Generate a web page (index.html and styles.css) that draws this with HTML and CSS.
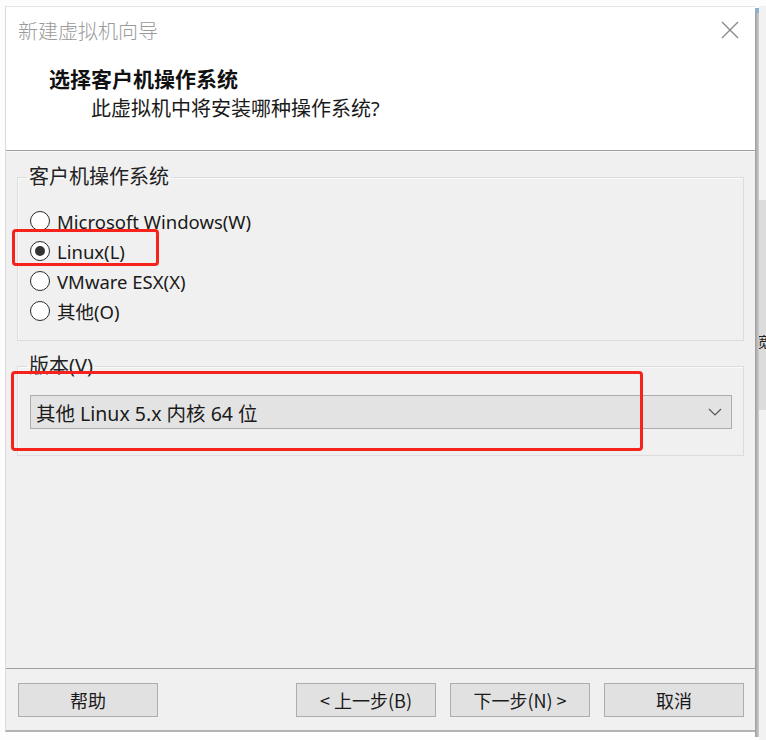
FILE: index.html
```html
<!DOCTYPE html>
<html lang="zh-CN">
<head>
  <meta charset="UTF-8">
  <title>新建虚拟机向导</title>
  <link rel="stylesheet" href="styles.css">
</head>
<body>
  <div class="screen">
    <!-- 向导窗口 -->
    <div class="window">
      <div class="header">
        <div class="titlebar">
          <span class="title">新建虚拟机向导</span>
          <svg class="close" width="18" height="18" viewBox="0 0 18 18">
            <line x1="1" y1="1" x2="17" y2="17" />
            <line x1="17" y1="1" x2="1" y2="17" />
          </svg>
        </div>
        <div class="heading">选择客户机操作系统</div>
        <div class="subheading">此虚拟机中将安装哪种操作系统?</div>
      </div>

      <div class="body">
        <fieldset class="group">
          <legend>客户机操作系统</legend>
          <div class="radio"><span class="dot"></span>Microsoft Windows(W)</div>
          <div class="radio checked"><span class="dot"></span>Linux(L)</div>
          <div class="radio"><span class="dot"></span>VMware ESX(X)</div>
          <div class="radio"><span class="dot"></span>其他(O)</div>
        </fieldset>

        <fieldset class="group version">
          <legend>版本(V)</legend>
          <div class="select">
            <span>其他 Linux 5.x 内核 64 位</span>
            <svg width="14" height="8" viewBox="0 0 14 8">
              <polyline points="1,1 7,7 13,1" />
            </svg>
          </div>
        </fieldset>

        <!-- 截图上的红色标注 -->
        <div class="mark mark-linux"></div>
        <div class="mark mark-version"></div>
      </div>

      <div class="footer">
        <button>帮助</button>
        <div class="spacer"></div>
        <button>&lt; 上一步(B)</button>
        <button>下一步(N) &gt;</button>
        <button>取消</button>
      </div>
    </div>

    <!-- 背后窗口的边缘 -->
    <div class="behind">
      <div class="edge"></div>
      <div class="track">
        <div class="thumb"></div>
        <span class="peek">宽</span>
      </div>
    </div>
  </div>
</body>
</html>
```

FILE: styles.css
```css
body {
  margin: 0;
  background: #fdfdfd;
  font-family: "Noto Sans", "Noto Sans CJK SC", sans-serif;
  color: #1a1a1a;
  overflow: hidden;
}

.screen {
  display: flex;
  width: 766px;
  height: 740px;
  padding-top: 6px;
  padding-left: 5px;
  box-sizing: border-box;
}

.window {
  display: flex;
  flex-direction: column;
  width: 750px;
  height: 726px;
  box-sizing: border-box;
  border-top: 1px solid #e4e4e4;
  border-left: 1px solid #dadada;
  border-bottom: 2px solid #b2b2b2;
  background: #f0f0f0;
}

.header {
  background: #fff;
  height: 143px;
  border-bottom: 1px solid #a0a0a0;
  box-shadow: 0 1px 0 #f8f8f8;
}

.titlebar {
  display: flex;
  align-items: center;
  justify-content: space-between;
  padding: 10px 16px 0 12px;
  height: 26px;
}

.title {
  font-size: 20px;
  color: #9a9a9a;
  font-family: "Noto Sans CJK SC", sans-serif;
  font-weight: 300;
}

.close line {
  stroke: #8a8a8a;
  stroke-width: 1.3;
}

.heading {
  margin-top: 21px;
  padding-left: 43px;
  font-size: 21px;
  line-height: 30px;
  font-weight: bold;
  color: #111;
}

.subheading {
  padding-left: 85px;
  font-size: 20px;
  line-height: 30px;
  color: #1a1a1a;
}

.body {
  flex: 1;
  position: relative;
}

.group {
  margin: 14px 11px 0 11px;
  padding: 17px 12px 14px 12px;
  border: 1px solid #dcdcdc;
  box-shadow: inset 1px 1px 0 #fafafa;
}

.group legend {
  margin-left: -3px;
  padding: 0 2px;
  font-size: 20px;
  line-height: 24px;
  color: #222;
}

.radio {
  display: flex;
  align-items: center;
  height: 30px;
  font-size: 18.5px;
  color: #1a1a1a;
}

.dot {
  width: 18px;
  height: 18px;
  border: 1px solid #2a2a2a;
  border-radius: 50%;
  background: #fff;
  margin-right: 7px;
  display: flex;
  align-items: center;
  justify-content: center;
}

.radio.checked .dot::after {
  content: "";
  width: 10px;
  height: 10px;
  border-radius: 50%;
  background: #333;
}

.version {
  margin-top: 13px;
  padding: 17px 11px 26px 12px;
}

.select {
  display: flex;
  align-items: center;
  justify-content: space-between;
  height: 34px;
  box-sizing: border-box;
  padding: 0 9px 0 5px;
  background: #e3e3e3;
  border: 1px solid #adadad;
  font-size: 19.5px;
}

.select polyline {
  fill: none;
  stroke: #555;
  stroke-width: 1.2;
}

.mark {
  position: absolute;
  border: 3px solid #f5231b;
  border-radius: 4px;
}

.mark-linux {
  left: 6px;
  top: 78px;
  width: 141px;
  height: 31px;
}

.mark-version {
  left: 5px;
  top: 220px;
  width: 626px;
  height: 74px;
}

.footer {
  display: flex;
  gap: 14px;
  padding: 14px 11px 13px 12px;
  border-top: 1px solid #a0a0a0;
}

.spacer {
  flex: 1;
}

.footer button {
  width: 140px;
  height: 34px;
  background: #e1e1e1;
  border: 1px solid #adadad;
  font-family: "Noto Sans CJK SC", sans-serif;
  font-size: 18px;
  color: #1a1a1a;
  padding: 0;
}

.behind {
  display: flex;
  width: 11px;
}

.edge {
  width: 4px;
  background: linear-gradient(to right, #9c9c9c, #cfcfcf);
  border-top: 5px solid #8fb0c8;
  margin-top: 2px;
  height: 724px;
}

.track {
  flex: 1;
  background: #f2f2f2;
  overflow: hidden;
  padding-top: 194px;
}

.thumb {
  width: 7px;
  height: 210px;
  background: #dcdcdc;
}

.peek {
  display: block;
  margin-top: -75px;
  margin-left: -2px;
  font-size: 14px;
  line-height: 14px;
  color: #222;
}
```
